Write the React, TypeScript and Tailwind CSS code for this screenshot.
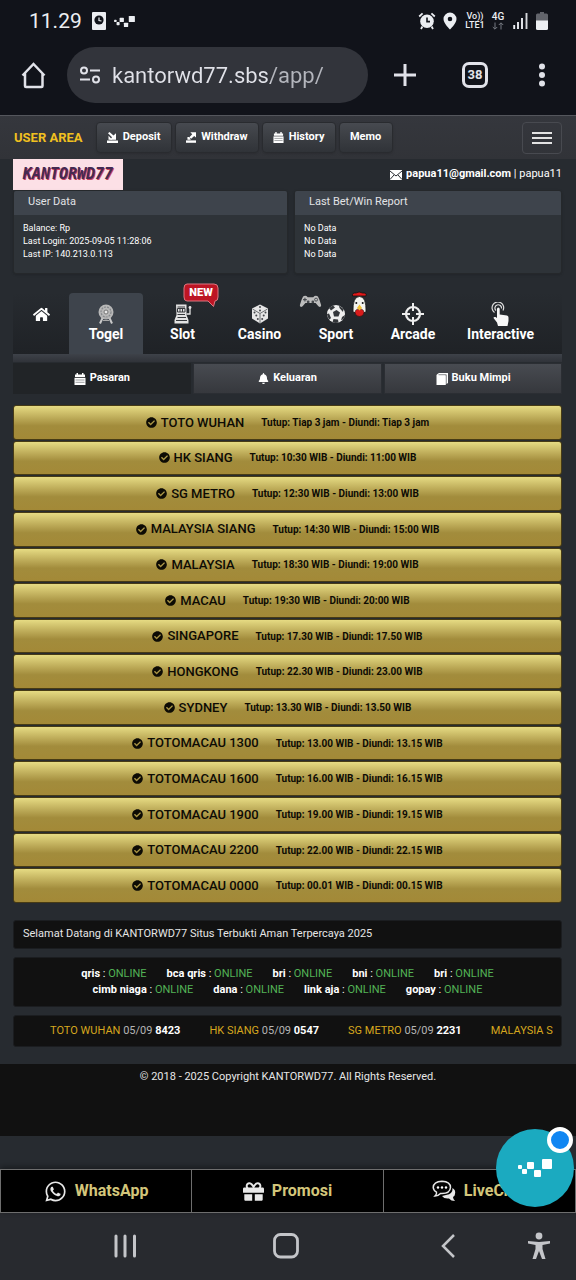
import React from "react";
import { FaHome, FaGift, FaWhatsapp, FaBell, FaCheckCircle } from "react-icons/fa";

const markets: [string, string][] = [
  ["TOTO WUHAN", "Tutup: Tiap 3 jam - Diundi: Tiap 3 jam"],
  ["HK SIANG", "Tutup: 10:30 WIB - Diundi: 11:00 WIB"],
  ["SG METRO", "Tutup: 12:30 WIB - Diundi: 13:00 WIB"],
  ["MALAYSIA SIANG", "Tutup: 14:30 WIB - Diundi: 15:00 WIB"],
  ["MALAYSIA", "Tutup: 18:30 WIB - Diundi: 19:00 WIB"],
  ["MACAU", "Tutup: 19:30 WIB - Diundi: 20:00 WIB"],
  ["SINGAPORE", "Tutup: 17.30 WIB - Diundi: 17.50 WIB"],
  ["HONGKONG", "Tutup: 22.30 WIB - Diundi: 23.00 WIB"],
  ["SYDNEY", "Tutup: 13.30 WIB - Diundi: 13.50 WIB"],
  ["TOTOMACAU 1300", "Tutup: 13.00 WIB - Diundi: 13.15 WIB"],
  ["TOTOMACAU 1600", "Tutup: 16.00 WIB - Diundi: 16.15 WIB"],
  ["TOTOMACAU 1900", "Tutup: 19.00 WIB - Diundi: 19.15 WIB"],
  ["TOTOMACAU 2200", "Tutup: 22.00 WIB - Diundi: 22.15 WIB"],
  ["TOTOMACAU 0000", "Tutup: 00.01 WIB - Diundi: 00.15 WIB"],
];

const banks = [
  ["qris", "bca qris", "bri", "bni", "bri"],
  ["cimb niaga", "dana", "link aja", "gopay"],
];

const results: { name: string; date?: string; num?: string }[] = [
  { name: "TOTO WUHAN", date: "05/09", num: "8423" },
  { name: "HK SIANG", date: "05/09", num: "0547" },
  { name: "SG METRO", date: "05/09", num: "2231" },
  { name: "MALAYSIA S" },
];

function SquaresMark({ className }: { className: string }) {
  return (
    <svg viewBox="0 0 34 18" className={className} fill="currentColor" aria-hidden="true">
      <rect x="0" y="6" width="4" height="4" rx="1" />
      <rect x="4" y="10" width="5" height="5" rx="1" />
      <rect x="9" y="3" width="7" height="7" rx="1" />
      <rect x="16" y="11" width="7" height="7" rx="1" />
      <rect x="24" y="0" width="10" height="10" rx="1" />
    </svg>
  );
}

function StatusBar() {
  return (
    <div className="flex h-[42px] items-center justify-between pl-[29px] pr-[28px] text-[#eceef2]">
      <div className="flex items-center">
        <span className="text-[21px] leading-6">11.29</span>
        <svg viewBox="0 0 14 18" className="ml-[10px] h-[18px] w-[14px]" aria-hidden="true">
          <rect width="14" height="18" rx="1" fill="#eceef2" />
          <circle cx="7" cy="8" r="4.6" fill="#11131a" />
          <path d="M7 5.5V8.5L9.5 9" stroke="#eceef2" strokeWidth="1.2" fill="none" />
        </svg>
        <SquaresMark className="ml-2 h-[11px] w-[21px]" />
      </div>
      <div className="flex items-center">
        <svg viewBox="0 0 18 18" className="size-[18px]" aria-hidden="true">
          <path d="M1.2 4.5L4.6 1.4M16.8 4.5L13.4 1.4M4.4 14.5L3 17M13.6 14.5L15 17" stroke="#eceef2" strokeWidth="1.8" />
          <circle cx="9" cy="9.3" r="6.8" fill="#eceef2" />
          <path d="M9 5.5V9.6H12" stroke="#11131a" strokeWidth="1.6" fill="none" />
        </svg>
        <svg viewBox="0 0 14 18" className="ml-[7px] h-[18px] w-[14px]" aria-hidden="true">
          <path fillRule="evenodd" fill="#eceef2" d="M7 .5A6.5 6.5 0 0 0 .5 7C.5 11.5 7 17.5 7 17.5S13.5 11.5 13.5 7A6.5 6.5 0 0 0 7 .5ZM7 4.7A2.3 2.3 0 1 1 7 9.3A2.3 2.3 0 0 1 7 4.7Z" />
        </svg>
        <div className="ml-[7px] w-[22px] text-center text-[9px] font-medium leading-[9px]">
          <div>Vo))</div>
          <div>LTE1</div>
        </div>
        <div className="ml-[5px] flex w-[14px] flex-col items-center">
          <span className="text-[10px] font-medium leading-[10px]">4G</span>
          <svg viewBox="0 0 12 8" className="h-2 w-3" stroke="#777a82" fill="none" aria-hidden="true">
            <path d="M3 .5V7M.8 5L3 7.2L5.2 5M9 7.5V1M6.8 3L9 .8L11.2 3" />
          </svg>
        </div>
        <svg viewBox="0 0 15 16" className="ml-2 h-4 w-[15px]" strokeWidth="1.9" aria-hidden="true">
          <path d="M1.2 12V16M5 9V16M9 5V16" stroke="#eceef2" />
          <path d="M13.5 0V16" stroke="#d5d7db" />
        </svg>
        <svg viewBox="0 0 12 18" className="ml-2 h-[18px] w-3" aria-hidden="true">
          <path d="M4 0H8V1.5H10.5Q12 1.5 12 3V9H0V3Q0 1.5 1.5 1.5H4Z" fill="#62646b" />
          <path d="M0 8.5H12V16.5Q12 18 10.5 18H1.5Q0 18 0 16.5Z" fill="#eceef2" />
        </svg>
      </div>
    </div>
  );
}

function BrowserBar() {
  return (
    <div className="flex h-[73px] items-start pl-[20px] pr-[30px] pt-[5px] text-[#e1e2e9]">
      <button aria-label="Home page" className="mt-[14px] size-7">
        <svg viewBox="0 0 28 28" fill="none" stroke="currentColor" strokeWidth="2.5">
          <path d="M2.5 14.5L13.5 3L24.5 14.5M5 12.5V25Q5 26 6 26H21.5Q22.5 26 22.5 25V12.5" />
        </svg>
      </button>
      <div className="ml-[19px] flex h-14 min-w-0 flex-1 items-center rounded-full bg-[#32343b] pl-3">
        <svg viewBox="0 0 22 18" className="h-[18px] w-[22px] shrink-0" fill="none" stroke="currentColor" strokeWidth="2" aria-hidden="true">
          <circle cx="5" cy="4.5" r="3" />
          <path d="M11 4.5H21M1 13.5H11" />
          <circle cx="17" cy="13.5" r="3" />
        </svg>
        <input
          aria-label="Address"
          readOnly
          value="kantorwd77.sbs/app/"
          className="ml-[11px] h-10 min-w-0 flex-1 bg-linear-to-r from-[#e1e2e9] from-[157px] to-[#b4b6bd] to-[160px] bg-clip-text text-[22px] text-transparent outline-none"
        />
      </div>
      <div className="flex h-14 shrink-0 items-center">
        <button aria-label="New tab" className="ml-[25px]">
          <svg viewBox="0 0 24 24" className="size-6" stroke="currentColor" strokeWidth="3">
            <path d="M12 1V23M1 12H23" />
          </svg>
        </button>
        <button aria-label="Open tabs" className="ml-[45px] flex size-[26px] items-center justify-center rounded-[7px] border-[3px] border-[#e1e2e9] text-[13px] font-bold leading-4">
          38
        </button>
        <button aria-label="Browser menu" className="ml-[50px]">
          <svg viewBox="0 0 8 24" className="h-6 w-2" fill="currentColor">
            <circle cx="4" cy="3.5" r="3" />
            <circle cx="4" cy="12" r="3" />
            <circle cx="4" cy="20.5" r="3" />
          </svg>
        </button>
      </div>
    </div>
  );
}

function CalendarIcon({ className }: { className: string }) {
  return (
    <svg viewBox="0 0 12 12" className={className} aria-hidden="true">
      <path d="M1 1.5H2.5V0H4V1.5H8V0H9.5V1.5H11V4H1Z" fill="currentColor" />
      <path d="M.5 4.8H11.5V12H.5Z" fill="currentColor" />
      <path d="M1.5 7H10.5M1.5 9.3H10.5" stroke="#3a3d42" strokeWidth=".5" />
    </svg>
  );
}

function BookIcon() {
  return (
    <svg viewBox="0 0 12 12" className="size-3" aria-hidden="true">
      <path d="M1.5 1L3 0H12V10L10.500 11V1.500H2.500V2.200H9.700V12H.5V2Z" fill="currentColor" />
      <path d="M1 2.500H9.500V11.500H1Z" fill="currentColor" />
    </svg>
  );
}

function MoneyIcon({ out }: { out?: boolean }) {
  return (
    <svg viewBox="0 0 11 11" className="size-[11px]" fill="currentColor" aria-hidden="true">
      <path d="M0 8.500H11V11H0Z" />
      {out ? (
        <>
          <path d="M1.500 7.800V5H3.500L5 7.800Z" />
          <path d="M4.500 0H10.500V5.500L8.500 4L5.400 6.800L3.500 5.200L6.500 2Z" />
        </>
      ) : (
        <>
          <path d="M1.500 7.800L5.300 7.800L1.500 3.800Z" />
          <path d="M1 1.200L2.500 0L6.500 3.600L9 1.200V7.800H3.200L5 5.300Z" />
        </>
      )}
    </svg>
  );
}

const barButton =
  "flex h-[31px] items-center justify-center rounded-[4px] border border-[#292b2f] bg-linear-to-b from-[#474a50] via-[#3b3e43] to-[#303338] px-[10px] text-[11px] font-bold text-white shadow";

function UserBar() {
  return (
    <nav className="flex h-[44px] items-center border-t border-[#54565c] bg-linear-to-b from-[#35373d] to-[#313338] px-[14px]">
      <a href="#user" className="text-[13px] font-bold text-[#f0c020]">USER AREA</a>
      <div className="ml-[13px] flex flex-1 gap-[3px]">
        <button className={barButton + " w-[76px] gap-[5px]"}><MoneyIcon />Deposit</button>
        <button className={barButton + " w-[84px] gap-[5px]"}><MoneyIcon out />Withdraw</button>
        <button className={barButton + " w-[74px] gap-[5px]"}><CalendarIcon className="size-[11px]" />History</button>
        <button className={barButton + " w-[54px]"}>Memo</button>
      </div>
      <button aria-label="Toggle navigation" className="flex h-[32px] w-10 flex-col items-center justify-center gap-[3px] rounded-[4px] border border-[#484a50]">
        <span className="h-[2px] w-5 bg-[#e3e3e3]" />
        <span className="h-[2px] w-5 bg-[#e3e3e3]" />
        <span className="h-[2px] w-5 bg-[#e3e3e3]" />
      </button>
    </nav>
  );
}

function Panel({ title, lines }: { title: string; lines: string[] }) {
  return (
    <section className="h-[84px] overflow-hidden rounded-[3px] border border-[#25282b] bg-[#2e3338] shadow">
      <h2 className="h-6 bg-[#3e444c] px-[14px] text-[11px] leading-[22px] text-[#e2e3e5]">{title}</h2>
      <div className="px-[9px] pt-[7px] text-[9px] leading-[13px] text-white">
        {lines.map((line, i) => (
          <p key={i}>{line}</p>
        ))}
      </div>
    </section>
  );
}

function WheelIcon() {
  return (
    <svg viewBox="0 0 20 20" className="size-5" aria-hidden="true">
      <path d="M7 13L4 19.5M13 13L16 19.5" stroke="#c8c8c8" strokeWidth="2" />
      <circle cx="10" cy="8" r="7.5" fill="#b8b8b8" />
      <circle cx="10" cy="8" r="5" fill="none" stroke="#84878b" strokeWidth="1.2" strokeDasharray="2 1" />
      <circle cx="10" cy="8" r="2" fill="#e8e8e8" stroke="#777" />
      <path d="M8 14H12M7 16.500H13" stroke="#a8a8a8" />
    </svg>
  );
}

function SlotIcon() {
  return (
    <svg viewBox="0 0 20 20" className="size-5" aria-hidden="true">
      <path d="M3 .5H13.500V11L15.500 16V19.500H1.500V16L3.500 11Z" fill="#e3e3e3" />
      <path d="M4.500 3H12M4.500 4.500V8H12V4.500ZM7 4.500V8M9.500 4.500V8M4.500 10.500H12M4.500 13.500H13M3 16.500H14" stroke="#36393d" fill="none" />
      <path d="M13.500 10H17V4" stroke="#e3e3e3" strokeWidth="1.3" fill="none" />
      <circle cx="17" cy="3.5" r="1.4" fill="#e3e3e3" />
    </svg>
  );
}

function DiceIcon() {
  return (
    <svg viewBox="0 0 20 20" className="size-5" aria-hidden="true">
      <path d="M10 .5L18 4.5V14.5L10 19.5L2 14.5V4.5Z" fill="#e6e6e6" />
      <path d="M2.5 5L10 9.5L17.5 5M10 9.5V19" stroke="#6d7073" fill="none" />
      <g fill="#44474b">
        <circle cx="10" cy="3" r="1" /><circle cx="10" cy="6.5" r="1" />
        <circle cx="4.500" cy="8.500" r="1" /><circle cx="6.300" cy="11.500" r="1" /><circle cx="7.800" cy="15" r="1" />
        <circle cx="15.500" cy="8.500" r="1" /><circle cx="13.700" cy="11.500" r="1" /><circle cx="12.200" cy="15" r="1" />
      </g>
    </svg>
  );
}

function BallIcon() {
  return (
    <svg viewBox="0 0 20 20" className="size-5" aria-hidden="true">
      <circle cx="10" cy="10" r="9" fill="#eeeeee" />
      <path d="M7 8L10.500 6L14 8.500L12.500 12.500H8ZM3 4L7 1.500L9 3.500L5 6.500ZM13 1.500L17.500 5L17 8L13.500 4ZM1 10L3 9.500L5 14L3.500 15.500Q1.200 13 1 10ZM7.500 15L12 15.500L12.500 18.500Q9.500 19.500 6.500 18.200ZM19 11L16 13L15 16.500Q18.500 14.500 19 11Z" fill="#33363a" />
    </svg>
  );
}

function TargetIcon() {
  return (
    <svg viewBox="0 0 22 22" className="size-[22px]" fill="none" stroke="#eeeeee" aria-hidden="true">
      <circle cx="11" cy="11" r="7" strokeWidth="2.2" />
      <path d="M11 0V8M11 14V22M0 11H8M14 11H22" strokeWidth="2" />
    </svg>
  );
}

function TouchIcon() {
  return (
    <svg viewBox="0 0 20 24" className="h-6 w-5" aria-hidden="true">
      <path d="M3.500 10.500A5.800 5.800 0 1 1 12 8.500M5 8.500A3.300 3.300 0 1 1 10.500 6.500" fill="none" stroke="#dedede" strokeWidth="1.200" />
      <path d="M6 7Q6 5.500 7.300 5.500T8.700 7V12.500L16 13.500Q17.500 14 17.500 15.500V19L16.500 24H7L6 20.500L2.500 16Q2.500 14.500 4.500 15L6 16Z" fill="#f7f7f7" />
    </svg>
  );
}

function GamepadIcon() {
  return (
    <svg viewBox="0 0 24 14" className="h-[13px] w-[23px]" aria-hidden="true">
      <path d="M4 1.5Q7 0 9 2.500H15Q17 0 20 1.500Q22 5 23.500 11Q23 14 20.500 12L17.500 8.500H6.500L3.500 12Q1 14 .5 11Q2 5 4 1.500Z" fill="#bdbdbd" />
      <path d="M4 5H8M6 3V7" stroke="#46494e" strokeWidth="1.2" />
      <circle cx="18" cy="5" r="1.6" fill="none" stroke="#46494e" />
      <circle cx="9.5" cy="7.5" r="1.5" fill="#44474b" />
      <circle cx="14.5" cy="7.5" r="1.5" fill="#44474b" />
    </svg>
  );
}

function RoosterIcon() {
  return (
    <svg viewBox="0 0 17 26" className="h-[26px] w-[17px]" aria-hidden="true">
      <path d="M1.500 5Q1 1.500 5 2Q8 0 11.500 2Q16 1.500 15 5Z" fill="#e01818" stroke="#111" strokeWidth=".8" />
      <path d="M2 21Q1.500 5.500 8.500 5.500Q15.500 5.500 15 21L12 22H5Z" fill="#f3f3ee" stroke="#111" strokeWidth=".8" />
      <path d="M4 21.500Q4 18 8.500 18Q13 18 13 21.500Q12.500 25.500 8.500 25.500T4 21.500Z" fill="#d81c1c" stroke="#111" strokeWidth=".5" />
      <path d="M6 17L8.500 13.500L11 17L8.500 19.500Z" fill="#f2c030" />
      <circle cx="5.300" cy="12" r="1" fill="#151515" />
      <circle cx="11.700" cy="12" r="1" fill="#151515" />
    </svg>
  );
}

function NewBadge() {
  return (
    <span className="absolute left-[40px] top-[-10px] block h-[25px] w-9">
      <svg viewBox="0 0 36 25" className="absolute inset-0" aria-hidden="true">
        <path d="M4 1H31Q35 1 35 5V14Q35 18 32 18L30.500 23.500L25 18H4Q1 18 1 14V5Q1 1 4 1Z" fill="#bd1524" stroke="#dc7780" />
      </svg>
      <span className="relative block text-center text-[11px] font-black leading-[19px] text-white">NEW</span>
    </span>
  );
}

const gameTabs: { label: string; icon: React.ReactNode; extra?: React.ReactNode }[] = [
  { label: "Togel", icon: <WheelIcon /> },
  { label: "Slot", icon: <SlotIcon />, extra: <NewBadge /> },
  { label: "Casino", icon: <DiceIcon /> },
  {
    label: "Sport",
    icon: <BallIcon />,
    extra: (
      <>
        <span className="absolute left-[2px] top-[2px]"><GamepadIcon /></span>
        <span className="absolute right-[7px] top-[-2px]"><RoosterIcon /></span>
      </>
    ),
  },
  { label: "Arcade", icon: <TargetIcon /> },
  { label: "Interactive", icon: <TouchIcon /> },
];

function GameNav() {
  return (
    <nav className="mt-[19px]">
      <div className="grid grid-cols-[56fr_74fr_79fr_75fr_78fr_76fr_99fr_12fr] bg-linear-to-b from-[#272b30] to-[#1f2226]">
        <a href="#home" aria-label="Home" className="flex justify-center pt-[13px]">
          <FaHome className="size-[17px] text-white" />
        </a>
        {gameTabs.map(({ label, icon, extra }, i) => (
          <a
            key={label}
            href={"#" + label.toLowerCase()}
            className={"relative flex h-[61px] flex-col items-center rounded-t-[4px] " + (i === 0 ? "bg-[#3e444c]" : "")}
          >
            <span className="mt-[9px] flex h-[23px] items-center">{icon}</span>
            <span className="text-[14px] font-bold leading-[18px] text-white">{label}</span>
            {extra}
          </a>
        ))}
      </div>
      <div className="h-2 bg-linear-to-b from-[#3e4249] to-[#303339]" />
      <div className="mt-px grid grid-cols-[178fr_190fr_178fr] gap-[2px] text-[11px] font-bold text-white">
        <button className="flex h-[31px] items-center justify-center gap-1 bg-[#212427]"><CalendarIcon className="size-3" />Pasaran</button>
        <button className="flex h-[31px] items-center justify-center gap-1 border border-[#2b2e33] bg-linear-to-b from-[#484b51] to-[#36383d]"><FaBell className="size-[11px]" />Keluaran</button>
        <button className="flex h-[31px] items-center justify-center gap-1 border border-[#2b2e33] bg-linear-to-b from-[#484b51] to-[#36383d]"><BookIcon />Buku Mimpi</button>
      </div>
    </nav>
  );
}

function ChatIcon() {
  return (
    <svg viewBox="0 0 24 22" className="h-[22px] w-6" aria-hidden="true">
      <path d="M14 15Q21 14 20.5 8Q24 10 23 14Q23 16 21 17Q21 19 23 21Q19 21 17 18.500Q12 19 10 16Z" fill="#e8e8e8" />
      <path d="M10 1.2Q18.500 1.500 18.500 7.500Q18 13.500 10 13.500L8.500 13.400Q6 16 3 16Q5 14 4.500 12.200Q1.500 10.500 1.200 7.500Q1.500 1.500 10 1.200Z" fill="#050505" stroke="#e8e8e8" strokeWidth="1.500" />
      <circle cx="6" cy="7.5" r="1.2" fill="#fff" /><circle cx="10" cy="7.5" r="1.2" fill="#fff" /><circle cx="14" cy="7.5" r="1.2" fill="#fff" />
    </svg>
  );
}

function BottomBar() {
  const cell = "flex items-center justify-center gap-2 border-[#6e6e6e]";
  return (
    <div className="relative mt-auto">
      <nav className="grid h-11 grid-cols-3 border border-[#6e6e6e] bg-black text-[16px] font-bold text-[#d3c67a] shadow-[0_-2px_6px_rgba(0,0,0,0.4)]">
        <a href="#whatsapp" className={cell + " border-r"}><FaWhatsapp className="size-[23px] text-[#e8e8e8]" />WhatsApp</a>
        <a href="#promosi" className={cell + " border-r"}><FaGift className="size-[21px] text-[#e8e8e8]" />Promosi</a>
        <a href="#livechat" className={cell}><ChatIcon />LiveChat</a>
      </nav>
      <button aria-label="Open chat" className="absolute right-[2px] top-[-40px] flex size-[78px] items-center justify-center rounded-full bg-[#1baac0] text-white">
        <SquaresMark className="h-[18px] w-[34px]" />
        <span className="absolute right-[1px] top-[-2px] size-[26px] rounded-full border-[4px] border-white bg-[#1086f2]" />
      </button>
    </div>
  );
}

function SystemNav() {
  return (
    <div className="grid h-[67px] grid-cols-[250fr_72fr_180fr_74fr] items-center bg-[#282a2f] pb-[2px] text-[#c4c5c9]">
      <button aria-label="Recent apps" className="flex justify-center">
        <svg viewBox="0 0 24 24" className="size-6" stroke="currentColor" strokeWidth="3" strokeLinecap="round"><path d="M3 2V22M12 2V22M21.5 2V22" /></svg>
      </button>
      <button aria-label="Home screen" className="flex justify-center">
        <svg viewBox="0 0 26 26" className="size-[26px]" fill="none" stroke="currentColor" strokeWidth="2.8"><rect x="1.5" y="1.5" width="23" height="22.5" rx="6" /></svg>
      </button>
      <button aria-label="Back" className="flex justify-center pl-[72px]">
        <svg viewBox="0 0 14 24" className="h-6 w-[14px]" fill="none" stroke="currentColor" strokeWidth="2.5"><path d="M13 1L2 12L13 23" /></svg>
      </button>
      <button aria-label="Accessibility" className="flex justify-center">
        <svg viewBox="0 0 22 28" className="h-7 w-[22px]" fill="currentColor">
          <circle cx="11" cy="4" r="3.4" />
          <path d="M0 9L11 10L22 9V11.500L14.500 13V17L17.500 27H14L11 19L8 27H4.500L7.500 17V13L0 11.500Z" />
        </svg>
      </button>
    </div>
  );
}

const darkBox = "rounded-[3px] border border-[#1b1d20] bg-[#111111]";

export default function App() {
  return (
    <div className="flex min-h-screen flex-col bg-[#272b30] font-[Roboto,sans-serif]">
      <header className="bg-[#11131a]">
        <StatusBar />
        <BrowserBar />
      </header>
      <UserBar />
      <main className="pl-[13px] pr-[14px]">
        <div className="flex h-[31px] items-center justify-between">
          <div className="flex h-full w-[110px] items-center justify-center bg-[#fce0e6]">
            <span className="font-['DejaVu_Sans_Mono',monospace] text-[15px] font-bold italic text-[#442a52] [text-shadow:1px_1px_0_#c83f5e]">
              KANTORWD77
            </span>
          </div>
          <p className="flex items-center text-[11px] text-white">
            <svg viewBox="0 0 12 10" className="mr-1 h-[10px] w-3" aria-hidden="true">
              <rect width="12" height="10" fill="#fff" />
              <path d="M0 1L6 6L12 1M0 9.5L4 5M12 9.5L8 5" stroke="#272b30" fill="none" />
            </svg>
            <strong className="font-bold">papua11@gmail.com</strong>
            <span className="whitespace-pre"> | papua11</span>
          </p>
        </div>
        <div className="grid grid-cols-[275fr_268fr] gap-[6px]">
          <Panel title="User Data" lines={["Balance: Rp", "Last Login: 2025-09-05 11:28:06", "Last IP: 140.213.0.113"]} />
          <Panel title="Last Bet/Win Report" lines={["No Data", "No Data", "No Data"]} />
        </div>
        <GameNav />
        <ul className="mt-[11px] grid min-h-[498px] auto-rows-fr gap-px">
          {markets.map(([name, time]) => (
            <li key={name} className="flex">
              <button className="flex flex-1 items-center justify-center rounded-[3px] border border-[#473b15] bg-linear-to-b from-[#e6db83] via-[#a28c3c] via-60% to-[#a38937] text-[#0d0b04]">
                <FaCheckCircle className="size-[11px]" />
                <span className="ml-1 text-[13px] font-medium">{name}</span>
                <span className="ml-[17px] text-[10px] font-bold">{time}</span>
              </button>
            </li>
          ))}
        </ul>
        <p className={darkBox + " mt-[17px] h-[29px] px-[9px] text-[11px] leading-[26px] text-[#e6e6e6]"}>
          Selamat Datang di KANTORWD77 Situs Terbukti Aman Terpercaya 2025
        </p>
        <div className={darkBox + " mt-2 flex h-[50px] flex-col justify-center text-[11px] leading-4"}>
          {banks.map((row, r) => (
            <div key={r} className="flex justify-center gap-5">
              {row.map((bank, i) => (
                <span key={i} className="text-white">
                  <b>{bank}</b> : <span className="text-[#53b356]">ONLINE</span>
                </span>
              ))}
            </div>
          ))}
        </div>
        <div className={darkBox + " mt-2 h-8 px-2"}>
          <div className="flex h-full items-center gap-[29px] overflow-hidden whitespace-nowrap pl-7 text-[11px] text-[#b5b5b5]">
            {results.map(({ name, date, num }) => (
              <span key={name}>
                <span className="text-[#d6a71e]">{name}</span>
                {date && <> {date} <b className="text-white">{num}</b></>}
              </span>
            ))}
          </div>
        </div>
      </main>
      <footer className="mt-[17px] h-[72px] bg-[#111111] pt-[5px] text-center text-[11px] leading-4 text-[#e6e6e6]">
        © 2018 - 2025 Copyright KANTORWD77. All Rights Reserved.
      </footer>
      <BottomBar />
      <SystemNav />
    </div>
  );
}
